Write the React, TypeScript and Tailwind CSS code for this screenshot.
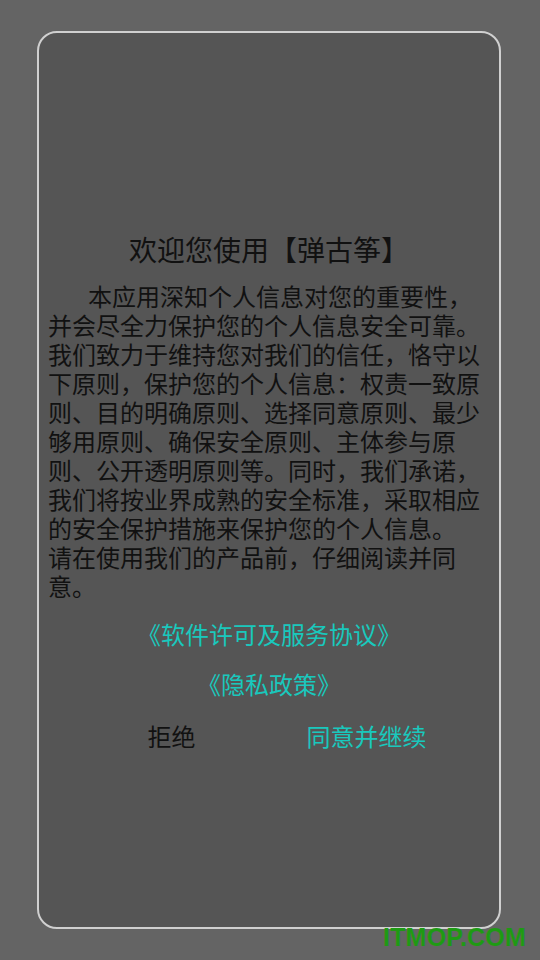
import React from 'react';

const lines = [
  '本应用深知个人信息对您的重要性，',
  '并会尽全力保护您的个人信息安全可靠。',
  '我们致力于维持您对我们的信任，恪守以',
  '下原则，保护您的个人信息：权责一致原',
  '则、目的明确原则、选择同意原则、最少',
  '够用原则、确保安全原则、主体参与原',
  '则、公开透明原则等。同时，我们承诺，',
  '我们将按业界成熟的安全标准，采取相应',
  '的安全保护措施来保护您的个人信息。',
  '请在使用我们的产品前，仔细阅读并同',
  '意。',
];

export default function App() {
  return (
    <div
      className="relative h-[960px] w-[540px] bg-[#646464] pt-[31px] pl-[37px]"
      style={{ fontFamily: '"Noto Sans CJK SC", "Noto Sans", sans-serif' }}
    >
      {/* Dialog card */}
      <div className="flex h-[898px] w-[464px] flex-col rounded-[20px] border-2 border-[#d0d0d0] bg-[#555555] pt-[198px]">
        <h1 className="text-center text-[28px] leading-[36px] font-normal text-[#111]">
          欢迎您使用【弹古筝】
        </h1>

        {/* Policy text */}
        <div className="mt-[14px] w-[452px] overflow-hidden pl-[9px] text-[24px] leading-[29px] text-[#111]">
          {lines.map((line, i) => (
            <div key={i} className={i === 0 ? 'whitespace-nowrap pl-[40px]' : 'whitespace-nowrap'}>
              {line}
            </div>
          ))}
        </div>

        {/* Links */}
        <div className="mt-[17px] text-center text-[24px] leading-[34px] text-[#19c8bd]">
          《软件许可及服务协议》
        </div>
        <div className="mt-[16px] text-center text-[24px] leading-[34px] text-[#19c8bd]">
          《隐私政策》
        </div>

        {/* Actions */}
        <div className="mx-auto mt-[18px] flex w-[390px] text-[24px] leading-[34px]">
          <button className="flex-1 text-center text-[#111]">拒绝</button>
          <button className="flex-1 text-center text-[#19c8bd]">同意并继续</button>
        </div>
      </div>

      {/* Watermark */}
      <div
        className="absolute top-[922px] left-[383px] text-[25px] leading-[30px] font-bold tracking-[0.2px] text-[#1e9a14]"
        style={{ fontFamily: '"Liberation Sans", Arial, sans-serif' }}
      >
        ITMOP.COM
      </div>
    </div>
  );
}
